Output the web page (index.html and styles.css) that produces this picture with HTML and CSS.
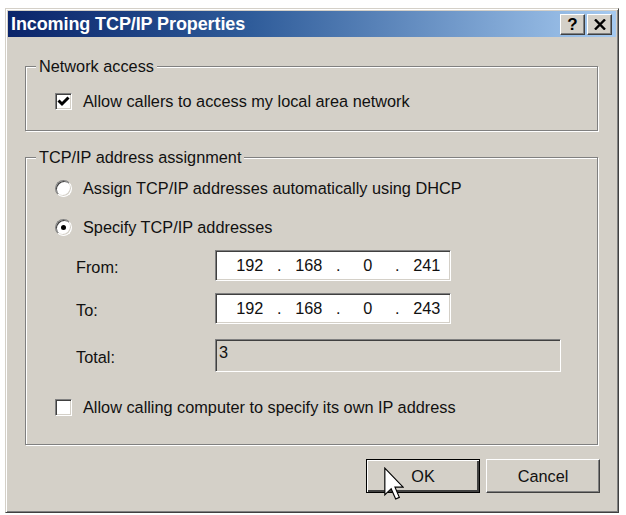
FILE: index.html
```html
<!DOCTYPE html>
<html lang="en">
<head>
  <meta charset="UTF-8">
  <title>Incoming TCP/IP Properties</title>
  <link rel="stylesheet" href="styles.css">
</head>
<body>
<div class="window">
  <div class="titlebar">
    <span class="title">Incoming TCP/IP Properties</span>
    <div class="caption-btns">
      <span class="cbtn cbtn-help">?</span>
      <span class="cbtn cbtn-close">
        <svg width="12" height="11" viewBox="0 0 12 11"><path d="M1 0.5 L11 10.5 M11 0.5 L1 10.5" stroke="#000" stroke-width="2.4"/></svg>
      </span>
    </div>
  </div>
  <div class="dlg-body">
    <fieldset class="group group-net">
      <legend class="group-title">Network access</legend>
      <label class="opt">
        <span class="check">
          <svg width="13" height="13" viewBox="0 0 13 13"><path d="M1.5 5.5 L5 9 L11.5 2.5" fill="none" stroke="#000" stroke-width="3"/></svg>
        </span>
        Allow callers to access my local area network
      </label>
    </fieldset>
    <fieldset class="group group-ip">
      <legend class="group-title">TCP/IP address assignment</legend>
      <label class="opt"><span class="radio"></span>Assign TCP/IP addresses automatically using DHCP</label>
      <label class="opt opt-2"><span class="radio radio-on"></span>Specify TCP/IP addresses</label>
      <div class="field-row row-from">
        <span class="field-label">From:</span>
        <div class="ip">
          <span>192</span><span>.</span><span>168</span><span>.</span><span>0</span><span>.</span><span>241</span>
        </div>
      </div>
      <div class="field-row row-to">
        <span class="field-label">To:</span>
        <div class="ip">
          <span>192</span><span>.</span><span>168</span><span>.</span><span>0</span><span>.</span><span>243</span>
        </div>
      </div>
      <div class="field-row row-total">
        <span class="field-label">Total:</span>
        <div class="total">3</div>
      </div>
      <label class="opt opt-last"><span class="check"></span>Allow calling computer to specify its own IP address</label>
    </fieldset>
    <div class="buttons">
      <button class="btn btn-default">OK
        <svg class="cursor" width="20" height="34" viewBox="0 0 12 20"><path d="M0.5 0.5 L0.5 16.5 L4.3 12.8 L7 19 L9.2 18 L6.6 11.9 L11.5 11.9 Z" fill="#fff" stroke="#000" stroke-width="0.7" stroke-linejoin="miter"/></svg>
      </button>
      <button class="btn">Cancel</button>
    </div>
  </div>
</div>
</body>
</html>
```

FILE: styles.css
```css
body {
  margin: 0;
  padding: 8px 0 0 5px;
  background: #fff;
  font: 16.3px "Liberation Sans", Arial, sans-serif;
  color: #111;
}
.window {
  width: 614px;
  height: 505px;
  box-sizing: border-box;
  padding: 2px;
  background: #d4d0c8;
  border: 1px solid;
  border-color: #d4d0c8 #404040 #404040 #d4d0c8;
  box-shadow: inset 1px 1px 0 #fff, inset -1px -1px 0 #808080;
}
.titlebar {
  height: 26px;
  display: flex;
  align-items: center;
  justify-content: space-between;
  padding: 0 4px 0 3px;
  background: linear-gradient(to right, #0a246a 0%, #2f5c9a 40%, #a6caf0 100%);
}
.title {
  color: #fff;
  font-weight: bold;
  font-size: 18px;
  letter-spacing: -0.1px;
}
.caption-btns {
  display: flex;
  gap: 2px;
}
.cbtn {
  width: 25px;
  height: 21px;
  box-sizing: border-box;
  display: flex;
  align-items: center;
  justify-content: center;
  background: #d4d0c8;
  border: 1px solid;
  border-color: #fff #404040 #404040 #fff;
  box-shadow: inset -1px -1px 0 #808080;
  font-weight: bold;
  font-size: 17px;
  line-height: 1;
  color: #000;
}
.dlg-body {
  padding: 0 18px 0 17px;
}
.group {
  margin: 0;
  padding: 0;
  min-inline-size: 0;
  border: 1px solid #808080;
  box-shadow: inset 1px 1px 0 #fff, 1px 1px 0 #fff;
}
.group-title {
  margin-left: 10px;
  padding: 0 3px;
  line-height: 18px;
  background: #d4d0c8;
}
.group-net {
  margin-top: 20px;
  padding-top: 16px;
  padding-bottom: 19px;
}
.group-ip {
  margin-top: 17px;
  padding-top: 12px;
  padding-bottom: 27px;
}
.opt {
  display: flex;
  align-items: center;
  gap: 11px;
  height: 20px;
  margin-left: 29px;
}
.opt-2 {
  margin-top: 19px;
}
.opt-last {
  margin-top: 25px;
}
.check {
  width: 17px;
  height: 17px;
  box-sizing: border-box;
  display: flex;
  align-items: center;
  justify-content: center;
  background: #fff;
  border: 1px solid;
  border-color: #808080 #fff #fff #808080;
  box-shadow: inset 1px 1px 0 #404040, inset -1px -1px 0 #d4d0c8;
}
.radio {
  width: 17px;
  height: 17px;
  box-sizing: border-box;
  border-radius: 50%;
  background: #fff;
  border: 1px solid;
  border-color: #808080 #fff #fff #808080;
  box-shadow: inset 1px 1px 0 #404040, inset -1px -1px 0 #d4d0c8;
  display: flex;
  align-items: center;
  justify-content: center;
}
.radio-on::after {
  content: '';
  width: 5px;
  height: 5px;
  border-radius: 50%;
  background: #000;
}
.field-row {
  display: flex;
  align-items: center;
  margin-left: 50px;
}
.row-from {
  margin-top: 13px;
}
.row-to {
  margin-top: 12px;
}
.row-total {
  margin-top: 15px;
}
.field-label {
  width: 139px;
  padding-top: 4px;
}
.ip,
.total {
  box-sizing: border-box;
  border: 1px solid;
  border-color: #808080 #fff #fff #808080;
  box-shadow: inset 1px 1px 0 #404040, inset -1px -1px 0 #d4d0c8;
}
.ip {
  width: 236px;
  height: 31px;
  background: #fff;
  display: flex;
  align-items: center;
  padding-left: 19px;
}
.ip span {
  width: 29.5px;
  text-align: center;
}
.total {
  width: 346px;
  height: 33px;
  padding: 2px 3px;
  line-height: 20px;
}
.buttons {
  display: flex;
  justify-content: flex-end;
  gap: 6px;
  margin-top: 14px;
  margin-right: -2px;
}
.btn {
  position: relative;
  width: 114px;
  height: 34px;
  box-sizing: border-box;
  padding: 0;
  font: inherit;
  color: #111;
  background: #d4d0c8;
  border: 1px solid;
  border-color: #fff #404040 #404040 #fff;
  box-shadow: inset -1px -1px 0 #808080;
}
.btn-default {
  border: 1px solid #000;
  box-shadow: inset 1px 1px 0 #fff, inset -2px -2px 0 #404040, inset -1px -1px 0 #808080;
}
.cursor {
  position: absolute;
  left: 17px;
  top: 7px;
}
```
